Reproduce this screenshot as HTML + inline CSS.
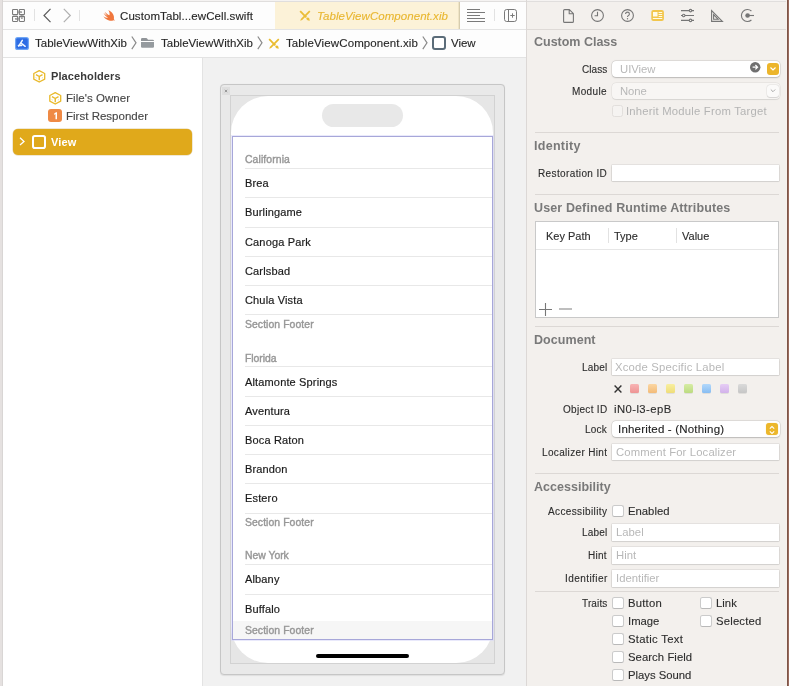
<!DOCTYPE html>
<html><head><meta charset="utf-8"><style>
html,body{margin:0;padding:0;width:789px;height:686px;overflow:hidden;background:#fff;}
body{position:relative;font-family:"Liberation Sans", sans-serif;}
.t{will-change:transform;}
.t{position:absolute;white-space:pre;}
.r{position:absolute;box-sizing:border-box;}
svg{position:absolute;overflow:visible;}
</style></head><body>
<div class="r" style="left:0px;top:0px;width:789px;height:686px;background:#ffffff"></div>
<div class="r" style="left:0px;top:0px;width:2px;height:686px;background:#e5e1e0"></div>
<div class="r" style="left:2px;top:0px;width:1px;height:686px;background:#d9d6d5"></div>
<div class="r" style="left:3px;top:0px;width:784px;height:1px;background:#f5f3f2"></div>
<div class="r" style="left:3px;top:1px;width:784px;height:1px;background:#e0dedd"></div>
<div class="r" style="left:3px;top:2px;width:523px;height:27px;background:#fdfdfd"></div>
<div class="r" style="left:3px;top:29px;width:523px;height:1px;background:#e3e3e3"></div>
<div class="r" style="left:3px;top:30px;width:523px;height:27px;background:#fdfdfd"></div>
<div class="r" style="left:3px;top:57px;width:523px;height:1px;background:#e3e3e3"></div>
<div class="r" style="left:3px;top:58px;width:199px;height:628px;background:#ffffff"></div>
<div class="r" style="left:202px;top:58px;width:1px;height:628px;background:#e3e3e3"></div>
<div class="r" style="left:203px;top:58px;width:323px;height:628px;background:#f1f1f1"></div>
<div class="r" style="left:526px;top:0px;width:1px;height:686px;background:#dcd8d6"></div>
<div class="r" style="left:527px;top:2px;width:260px;height:684px;background:#f3f0ed"></div>
<div class="r" style="left:527px;top:29px;width:260px;height:1px;background:#dedad7"></div>
<div class="r" style="left:786px;top:0px;width:1px;height:686px;background:#f9f0ec"></div>
<div class="r" style="left:787px;top:0px;width:1px;height:686px;background:#7b5649"></div>
<div class="r" style="left:788px;top:0px;width:1px;height:686px;background:#9b6b5d"></div>
<svg style="left:12px;top:9px;" width="13" height="13" viewBox="0 0 13 13"><g fill="none" stroke="#7a7a7a" stroke-width="1.1"><rect x="0.55" y="0.55" width="5.1" height="5.1" rx="0.6"/><rect x="7.35" y="0.55" width="5.1" height="5.1" rx="0.6"/><rect x="0.55" y="7.35" width="5.1" height="5.1" rx="0.6"/><rect x="7.35" y="7.35" width="5.1" height="5.1" rx="0.6"/><path d="M5.6 3.1H9.6M8.6 2.1L9.6 3.1L8.6 4.1M9.9 5.6V9.6M8.9 8.6L9.9 9.6L10.9 8.6M7.4 9.9H3.4M4.4 8.9L3.4 9.9L4.4 10.9" stroke-width="0.9"/></g></svg>
<div class="r" style="left:34px;top:9px;width:1px;height:12px;background:#e2e2e2"></div>
<svg style="left:43px;top:8px;" width="9" height="15" viewBox="0 0 9 15"><path d="M7.5 0.8L1 7.5L7.5 14.2" fill="none" stroke="#5c5c5c" stroke-width="1.2"/></svg>
<svg style="left:63px;top:8px;" width="9" height="15" viewBox="0 0 9 15"><path d="M0.8 0.8L7.3 7.5L0.8 14.2" fill="none" stroke="#b0b0b0" stroke-width="1.2"/></svg>
<div class="r" style="left:79px;top:10px;width:1px;height:11px;background:#e2e2e2"></div>
<svg style="left:100px;top:7px;" width="16" height="16" viewBox="0 0 16 16"><g transform="translate(3.4 4.2) scale(0.64) translate(-2.7 -3.84)"><path d="M13.543 3.844c4.114 2.489 6.545 7.806 5.521 12.089.25.393.47.85.687 1.342.23.528.43 1.145.33 1.87-.43-.813-1.06-1.157-1.564-1.234-1.928 1.045-4.583 1.292-6.896.627C8.768 17.755 5.87 15.86 3.757 13.29a11.02 11.02 0 0 1-1.05-1.556c2.136 1.696 4.77 2.732 7.29 2.696-3.064-2.08-5.58-4.877-7.137-7.69 2.13 1.795 4.78 3.68 6.73 4.77-2.063-2.1-3.843-4.61-4.846-6.915 1.79 1.95 5.067 4.424 7.293 5.578.153-.406.237-.811.266-1.214.24-2.535-.5-5.132-1.96-7.115z" fill="#f0773d"/></g></svg>
<div class="t" style="left:120px;top:11px;font-size:11.5px;line-height:11.5px;color:#262626;font-weight:400;letter-spacing:0.079px;-webkit-text-stroke:0.12px #262626;">CustomTabl...ewCell.swift</div>
<div class="r" style="left:275px;top:2px;width:184px;height:27px;background:#fcf2d8"></div>
<div class="r" style="left:458px;top:2px;width:1px;height:27px;background:#efe4c6"></div>
<div class="r" style="left:459px;top:2px;width:1px;height:27px;background:#d6ccae"></div>
<svg style="left:299px;top:10px;" width="12" height="11" viewBox="0 0 12 11"><g fill="#ebbd35"><path d="M10.2 0.6L11.4 1.8L3.2 10L1.2 10.8L2 8.8Z"/><path d="M0.5 1.8L1.8 0.5L8 6.7L6.7 8Z"/><path d="M7.3 8.3Q8.2 7.2 9.2 7.5Q10.6 8 10.8 10.8Q8 10.6 7.5 9.2Q7.3 8.8 7.3 8.3Z"/></g></svg>
<div class="t" style="left:317px;top:11px;font-size:11.5px;line-height:11.5px;color:#e8b630;font-weight:400;font-style:italic;letter-spacing:0.055px;-webkit-text-stroke:0.12px #e8b630;">TableViewComponent.xib</div>
<svg style="left:467px;top:9px;" width="19" height="13" viewBox="0 0 19 13"><g stroke="#7a7a7a" stroke-width="1"><path d="M0 0.5H13M0 3.5H18M0 6.5H13M0 9.5H18M0 12.5H18"/></g></svg>
<div class="r" style="left:494px;top:9px;width:1px;height:12px;background:#e2e2e2"></div>
<svg style="left:504px;top:9px;" width="14" height="13" viewBox="0 0 14 13"><g fill="none" stroke="#7a7a7a" stroke-width="1"><rect x="0.5" y="0.5" width="12" height="12" rx="2.2"/><path d="M4.5 0.5V12.5M6.3 6.5H10.7M8.5 4.3V8.7"/></g></svg>
<svg style="left:15px;top:37px;" width="14" height="13" viewBox="0 0 14 13"><rect x="0" y="0" width="14" height="13" rx="2.6" fill="#6fa6f5"/><rect x="1.2" y="1.2" width="11.6" height="10.6" rx="1.4" fill="#2c6ce4"/><g stroke="#eef6ff" stroke-width="1.5" stroke-linecap="round" fill="none"><path d="M7.3 3.4L3.7 9.2M3.4 8.6H6.6M6.4 6.3L10.2 9.3"/></g></svg>
<div class="t" style="left:35px;top:38px;font-size:11.5px;line-height:11.5px;color:#262626;font-weight:400;letter-spacing:0.010px;-webkit-text-stroke:0.12px #262626;">TableViewWithXib</div>
<svg style="left:131px;top:36px;" width="6" height="14" viewBox="0 0 6 14"><path d="M0.8 0.5L5 6.8L0.8 13.2" fill="none" stroke="#8a8a8a" stroke-width="1.2"/></svg>
<svg style="left:141px;top:38px;" width="13" height="10" viewBox="0 0 13 10"><path d="M0 1.2Q0 0 1.2 0H5Q6 0 6.5 1L7 1.8H11.8Q13 1.8 13 3V2.9H0Z" fill="#909498"/><path d="M0 4H13V8.6Q13 9.8 11.8 9.8H1.2Q0 9.8 0 8.6Z" fill="#959a9e"/></svg>
<div class="t" style="left:161px;top:38px;font-size:11.5px;line-height:11.5px;color:#262626;font-weight:400;letter-spacing:0.010px;-webkit-text-stroke:0.12px #262626;">TableViewWithXib</div>
<svg style="left:257px;top:36px;" width="6" height="14" viewBox="0 0 6 14"><path d="M0.8 0.5L5 6.8L0.8 13.2" fill="none" stroke="#8a8a8a" stroke-width="1.2"/></svg>
<svg style="left:268px;top:38px;" width="12" height="11" viewBox="0 0 12 11"><g fill="#e9bb2f"><path d="M10.2 0.6L11.4 1.8L3.2 10L1.2 10.8L2 8.8Z"/><path d="M0.5 1.8L1.8 0.5L8 6.7L6.7 8Z"/><path d="M7.3 8.3Q8.2 7.2 9.2 7.5Q10.6 8 10.8 10.8Q8 10.6 7.5 9.2Q7.3 8.8 7.3 8.3Z"/></g></svg>
<div class="t" style="left:286px;top:38px;font-size:11.5px;line-height:11.5px;color:#262626;font-weight:400;letter-spacing:0.111px;-webkit-text-stroke:0.12px #262626;">TableViewComponent.xib</div>
<svg style="left:422px;top:36px;" width="6" height="14" viewBox="0 0 6 14"><path d="M0.8 0.5L5 6.8L0.8 13.2" fill="none" stroke="#8a8a8a" stroke-width="1.2"/></svg>
<svg style="left:432px;top:36px;" width="14" height="14" viewBox="0 0 14 14"><rect x="1" y="1" width="12" height="12" rx="2" fill="#fff" stroke="#5b6c79" stroke-width="2"/></svg>
<div class="t" style="left:451px;top:38px;font-size:11.5px;line-height:11.5px;color:#262626;font-weight:400;letter-spacing:-0.055px;-webkit-text-stroke:0.12px #262626;">View</div>
<svg style="left:33px;top:70px;" width="13" height="13" viewBox="0 0 13 13"><g fill="none" stroke="#e9b92a" stroke-linejoin="round"><path d="M6.25 0.7L11.7 3.5V9.2L6.25 12L0.8 9.2V3.5Z" stroke-width="1.3"/><path d="M3 4.6L6.25 6.5L9.5 4.6M6.25 6.5V10.2" stroke-width="1.4"/><path d="M2.6 7.6L3.6 8.1M9.9 7.6L8.9 8.1" stroke-width="0.9" opacity="0.6"/></g></svg>
<div class="t" style="left:51px;top:71px;font-size:11px;line-height:11px;color:#3a3a3a;font-weight:700;letter-spacing:0.101px;">Placeholders</div>
<svg style="left:49px;top:92px;" width="13" height="13" viewBox="0 0 13 13"><g fill="none" stroke="#e9b92a" stroke-linejoin="round"><path d="M6.25 0.7L11.7 3.5V9.2L6.25 12L0.8 9.2V3.5Z" stroke-width="1.3"/><path d="M3 4.6L6.25 6.5L9.5 4.6M6.25 6.5V10.2" stroke-width="1.4"/><path d="M2.6 7.6L3.6 8.1M9.9 7.6L8.9 8.1" stroke-width="0.9" opacity="0.6"/></g></svg>
<div class="t" style="left:66px;top:93px;font-size:11.5px;line-height:11.5px;color:#454545;font-weight:400;letter-spacing:0.046px;-webkit-text-stroke:0.12px #454545;">File's Owner</div>
<div class="r" style="left:48px;top:109px;width:14px;height:13px;background:#ef8a45;border-radius:3px"></div>
<svg style="left:48px;top:109px;" width="14" height="13" viewBox="0 0 14 13"><path d="M6.2 4.6L8 3.2H9V10.2H7.5V5.1L6.2 5.9Z" fill="#fff"/></svg>
<div class="t" style="left:66px;top:111px;font-size:11.5px;line-height:11.5px;color:#454545;font-weight:400;letter-spacing:0.013px;-webkit-text-stroke:0.12px #454545;">First Responder</div>
<div class="r" style="left:13px;top:129px;width:179px;height:26px;background:#e0a91b;border-radius:5px;box-shadow:0 0 0 0.5px rgba(170,120,10,0.35)"></div>
<svg style="left:19px;top:137px;" width="7" height="9" viewBox="0 0 7 9"><path d="M1 0.8L5 4.4L1 8" fill="none" stroke="#fff" stroke-width="1.3"/></svg>
<svg style="left:32px;top:135px;" width="14" height="14" viewBox="0 0 14 14"><rect x="1" y="1" width="12" height="12" rx="1.8" fill="none" stroke="#fff" stroke-width="2"/></svg>
<div class="t" style="left:50.5px;top:137px;font-size:11px;line-height:11px;color:#ffffff;font-weight:700;letter-spacing:0.156px;">View</div>
<div class="r" style="left:220px;top:84px;width:285px;height:591px;background:#e9e9e9;border:1px solid #c6c6c6;border-radius:4px;box-shadow:0 0.5px 1px rgba(0,0,0,0.08)"></div>
<div class="r" style="left:222px;top:87px;width:8px;height:8px;background:#dedede"></div>
<svg style="left:223px;top:88px;" width="6" height="6" viewBox="0 0 6 6"><path d="M1.8 1.8L4.2 4.2M4.2 1.8L1.8 4.2" stroke="#9a9a9a" stroke-width="1"/></svg>
<div class="r" style="left:230px;top:95px;width:265px;height:569px;background:#e6e6e6;border:1px solid #d2d2d2"></div>
<div class="r" style="left:231px;top:96px;width:262px;height:567px;background:#ffffff;border-radius:37px"></div>
<div class="r" style="left:322px;top:104px;width:81px;height:23px;background:#e8e8e8;border-radius:11.5px"></div>
<div class="r" style="left:316px;top:654px;width:93px;height:4px;background:#000;border-radius:2px"></div>
<div class="r" style="left:232px;top:621px;width:260px;height:18px;background:#f6f6f6"></div>
<div class="r" style="left:232px;top:136px;width:261px;height:504px;border:1px solid #a7a7d9;box-shadow:0 0 0 1px rgba(215,215,248,0.55)"></div>
<div class="t" style="left:245.3px;top:155px;font-size:10.4px;line-height:10.4px;color:#979797;font-weight:400;letter-spacing:0.109px;-webkit-text-stroke:0.4px #979797;">California</div>
<div class="r" style="left:245px;top:168px;width:247px;height:1px;background:#e8e8e8"></div>
<div class="r" style="left:245px;top:197px;width:247px;height:1px;background:#e8e8e8"></div>
<div class="r" style="left:245px;top:227px;width:247px;height:1px;background:#e8e8e8"></div>
<div class="r" style="left:245px;top:256px;width:247px;height:1px;background:#e8e8e8"></div>
<div class="r" style="left:245px;top:285px;width:247px;height:1px;background:#e8e8e8"></div>
<div class="r" style="left:245px;top:314px;width:247px;height:1px;background:#e8e8e8"></div>
<div class="t" style="left:245px;top:178px;font-size:11px;line-height:11px;color:#1a1a1a;font-weight:400;letter-spacing:0.150px;-webkit-text-stroke:0.18px #1a1a1a;">Brea</div>
<div class="t" style="left:245px;top:207px;font-size:11px;line-height:11px;color:#1a1a1a;font-weight:400;letter-spacing:0.150px;-webkit-text-stroke:0.18px #1a1a1a;">Burlingame</div>
<div class="t" style="left:245px;top:237px;font-size:11px;line-height:11px;color:#1a1a1a;font-weight:400;letter-spacing:0.150px;-webkit-text-stroke:0.18px #1a1a1a;">Canoga Park</div>
<div class="t" style="left:245px;top:266px;font-size:11px;line-height:11px;color:#1a1a1a;font-weight:400;letter-spacing:0.150px;-webkit-text-stroke:0.18px #1a1a1a;">Carlsbad</div>
<div class="t" style="left:245px;top:295px;font-size:11px;line-height:11px;color:#1a1a1a;font-weight:400;letter-spacing:0.150px;-webkit-text-stroke:0.18px #1a1a1a;">Chula Vista</div>
<div class="t" style="left:245.3px;top:320px;font-size:10.4px;line-height:10.4px;color:#979797;font-weight:400;letter-spacing:0.080px;-webkit-text-stroke:0.4px #979797;">Section Footer</div>
<div class="t" style="left:245.3px;top:354px;font-size:10.4px;line-height:10.4px;color:#979797;font-weight:400;letter-spacing:-0.024px;-webkit-text-stroke:0.4px #979797;">Florida</div>
<div class="r" style="left:245px;top:366px;width:247px;height:1px;background:#e8e8e8"></div>
<div class="r" style="left:245px;top:396px;width:247px;height:1px;background:#e8e8e8"></div>
<div class="r" style="left:245px;top:425px;width:247px;height:1px;background:#e8e8e8"></div>
<div class="r" style="left:245px;top:454px;width:247px;height:1px;background:#e8e8e8"></div>
<div class="r" style="left:245px;top:483px;width:247px;height:1px;background:#e8e8e8"></div>
<div class="r" style="left:245px;top:513px;width:247px;height:1px;background:#e8e8e8"></div>
<div class="t" style="left:245px;top:377px;font-size:11px;line-height:11px;color:#1a1a1a;font-weight:400;letter-spacing:0.150px;-webkit-text-stroke:0.18px #1a1a1a;">Altamonte Springs</div>
<div class="t" style="left:245px;top:406px;font-size:11px;line-height:11px;color:#1a1a1a;font-weight:400;letter-spacing:0.150px;-webkit-text-stroke:0.18px #1a1a1a;">Aventura</div>
<div class="t" style="left:245px;top:435px;font-size:11px;line-height:11px;color:#1a1a1a;font-weight:400;letter-spacing:0.150px;-webkit-text-stroke:0.18px #1a1a1a;">Boca Raton</div>
<div class="t" style="left:245px;top:464px;font-size:11px;line-height:11px;color:#1a1a1a;font-weight:400;letter-spacing:0.150px;-webkit-text-stroke:0.18px #1a1a1a;">Brandon</div>
<div class="t" style="left:245px;top:493px;font-size:11px;line-height:11px;color:#1a1a1a;font-weight:400;letter-spacing:0.150px;-webkit-text-stroke:0.18px #1a1a1a;">Estero</div>
<div class="t" style="left:245.3px;top:518px;font-size:10.4px;line-height:10.4px;color:#979797;font-weight:400;letter-spacing:0.080px;-webkit-text-stroke:0.4px #979797;">Section Footer</div>
<div class="t" style="left:245.3px;top:551px;font-size:10.4px;line-height:10.4px;color:#979797;font-weight:400;letter-spacing:-0.013px;-webkit-text-stroke:0.4px #979797;">New York</div>
<div class="r" style="left:245px;top:564px;width:247px;height:1px;background:#e8e8e8"></div>
<div class="r" style="left:245px;top:594px;width:247px;height:1px;background:#e8e8e8"></div>
<div class="t" style="left:245px;top:574px;font-size:11px;line-height:11px;color:#1a1a1a;font-weight:400;letter-spacing:0.150px;-webkit-text-stroke:0.18px #1a1a1a;">Albany</div>
<div class="t" style="left:245px;top:604px;font-size:11px;line-height:11px;color:#1a1a1a;font-weight:400;letter-spacing:0.150px;-webkit-text-stroke:0.18px #1a1a1a;">Buffalo</div>
<div class="t" style="left:245.3px;top:626px;font-size:10.4px;line-height:10.4px;color:#979797;font-weight:400;letter-spacing:0.080px;-webkit-text-stroke:0.4px #979797;">Section Footer</div>
<svg style="left:563px;top:9px;" width="11" height="14" viewBox="0 0 11 14"><path d="M0.6 1.6Q0.6 0.6 1.6 0.6H6.4L10.4 4.6V12.4Q10.4 13.4 9.4 13.4H1.6Q0.6 13.4 0.6 12.4Z M6.2 0.8V4.8H10.2" fill="none" stroke="#767676" stroke-width="1.1" stroke-linejoin="round"/></svg>
<svg style="left:591px;top:9px;" width="13" height="13" viewBox="0 0 13 13"><circle cx="6.5" cy="6.5" r="5.9" fill="none" stroke="#767676" stroke-width="1.1"/><path d="M6.5 2.8V6.8H3.6" fill="none" stroke="#767676" stroke-width="1.1"/></svg>
<svg style="left:621px;top:9px;" width="13" height="13" viewBox="0 0 13 13"><circle cx="6.5" cy="6.5" r="5.9" fill="none" stroke="#767676" stroke-width="1.1"/><path d="M4.6 5.1Q4.6 3.1 6.5 3.1Q8.4 3.1 8.4 4.9Q8.4 6 7.3 6.6Q6.5 7.1 6.5 8" fill="none" stroke="#767676" stroke-width="1.1"/><circle cx="6.5" cy="9.8" r="0.7" fill="#767676"/></svg>
<svg style="left:651px;top:9px;" width="14" height="13" viewBox="0 0 14 13"><rect x="0.3" y="0.9" width="12.6" height="11" rx="2" fill="#f2c64c"/><rect x="2" y="3" width="4.5" height="4.5" fill="#fffbe8"/><path d="M7.6 3.5H11.2M7.6 5.5H11.2M7.6 7.5H11.2M1.8 9.5H11.3" stroke="#fffbe8" stroke-width="1"/></svg>
<svg style="left:681px;top:9px;" width="14" height="13" viewBox="0 0 14 13"><g fill="none" stroke="#767676" stroke-width="1.1"><path d="M0 1.6H8.2M10.8 1.6H13M0 6.5H1.4M4 6.5H13M0 11.4H8.2M10.8 11.4H13"/><circle cx="9.5" cy="1.6" r="1.25"/><circle cx="2.7" cy="6.5" r="1.25"/><circle cx="9.5" cy="11.4" r="1.25"/></g></svg>
<svg style="left:711px;top:10px;" width="13" height="12" viewBox="0 0 13 12"><g fill="none" stroke="#767676" stroke-width="1.1" stroke-linejoin="miter"><path d="M0.6 0.6V11.4H11.4Z"/><path d="M2.6 4.7V9.3H7.2Z" stroke-width="1.1"/></g></svg>
<svg style="left:741px;top:9px;" width="14" height="13" viewBox="0 0 14 13"><path d="M10.4 2A6 6 0 1 0 10.4 11" fill="none" stroke="#767676" stroke-width="1.1"/><circle cx="6.6" cy="6.5" r="2.3" fill="#767676"/><path d="M6.6 6.5H13" stroke="#767676" stroke-width="1.1"/></svg>
<div class="t" style="left:534.3px;top:36px;font-size:12.5px;line-height:12.5px;color:#797979;font-weight:700;letter-spacing:-0.013px;">Custom Class</div>
<div class="t" style="left:581.80px;top:65px;font-size:10px;line-height:10px;color:#2d2d2d;font-weight:400;letter-spacing:0.077px;-webkit-text-stroke:0.12px #2d2d2d;">Class</div>
<div class="r" style="left:612px;top:61px;width:168px;height:16px;background:#fff;border-radius:4px;box-shadow:0 0 0 0.5px rgba(0,0,0,0.12), 0 0.5px 1.5px rgba(0,0,0,0.18);"></div>
<div class="t" style="left:619.5px;top:64px;font-size:11.3px;line-height:11.3px;color:#b8b8b8;font-weight:400;letter-spacing:-0.016px;">UIView</div>
<svg style="left:750px;top:62px;" width="11" height="11" viewBox="0 0 11 11"><circle cx="5.2" cy="5.2" r="5.2" fill="#6f6f6f"/><path d="M2.6 5.2H7.6M5.4 3L7.6 5.2L5.4 7.4" fill="none" stroke="#fff" stroke-width="1.2"/></svg>
<div class="r" style="left:767px;top:63px;width:12px;height:12px;background:#ecb52b;border-radius:3px"></div>
<svg style="left:769px;top:66px;" width="8" height="6" viewBox="0 0 8 6"><path d="M1.5 1.5L4 4L6.5 1.5" fill="none" stroke="#fff" stroke-width="1.2"/></svg>
<div class="t" style="left:572.30px;top:87px;font-size:10px;line-height:10px;color:#2d2d2d;font-weight:400;letter-spacing:0.348px;-webkit-text-stroke:0.12px #2d2d2d;">Module</div>
<div class="r" style="left:612px;top:83px;width:168px;height:16px;background:#f8f6f4;border-radius:4px;box-shadow:0 0 0 0.5px rgba(0,0,0,0.07), 0 0.5px 1px rgba(0,0,0,0.08)"></div>
<div class="r" style="left:767px;top:85px;width:12px;height:12px;background:#fbfaf9;border-radius:3px;box-shadow:0 0 0 0.5px rgba(0,0,0,0.08),0 0.5px 1px rgba(0,0,0,0.1)"></div>
<svg style="left:769px;top:88px;" width="8" height="6" viewBox="0 0 8 6"><path d="M1.8 1.5L4 3.7L6.2 1.5" fill="none" stroke="#aaa" stroke-width="1"/></svg>
<div class="t" style="left:619.5px;top:86px;font-size:11.3px;line-height:11.3px;color:#b8b8b8;font-weight:400;letter-spacing:-0.079px;">None</div>
<div class="r" style="left:611.5px;top:105.3px;width:11.5px;height:11.3px;background:#f5f3f1;border:1px solid #e2dfdc;border-radius:2.5px"></div>
<div class="t" style="left:626.3px;top:106px;font-size:11.3px;line-height:11.3px;color:#b4b4b4;font-weight:400;letter-spacing:0.207px;">Inherit Module From Target</div>
<div class="r" style="left:535px;top:132px;width:244px;height:1px;background:#dcd8d5"></div>
<div class="t" style="left:534.3px;top:140px;font-size:12.5px;line-height:12.5px;color:#797979;font-weight:700;letter-spacing:0.293px;">Identity</div>
<div class="t" style="left:538.00px;top:169px;font-size:10px;line-height:10px;color:#2d2d2d;font-weight:400;letter-spacing:0.377px;-webkit-text-stroke:0.12px #2d2d2d;">Restoration ID</div>
<div class="r" style="left:611.5px;top:164.5px;width:167.5px;height:16.5px;background:#fff;box-shadow:0 0 0 0.5px rgba(0,0,0,0.12), 0 0.5px 1.5px rgba(0,0,0,0.18);"></div>
<div class="r" style="left:535px;top:194px;width:244px;height:1px;background:#dcd8d5"></div>
<div class="t" style="left:534.3px;top:202px;font-size:12.5px;line-height:12.5px;color:#797979;font-weight:700;letter-spacing:0.122px;">User Defined Runtime Attributes</div>
<div class="r" style="left:535px;top:221px;width:244px;height:97px;background:#fff;border:1px solid #c9c9c9"></div>
<div class="r" style="left:536px;top:249px;width:242px;height:1px;background:#e6e6e6"></div>
<div class="r" style="left:608px;top:228px;width:1px;height:15px;background:#e2e2e2"></div>
<div class="r" style="left:676px;top:228px;width:1px;height:15px;background:#e2e2e2"></div>
<div class="t" style="left:545.7px;top:231px;font-size:11px;line-height:11px;color:#2d2d2d;font-weight:400;-webkit-text-stroke:0.12px #2d2d2d;">Key Path</div>
<div class="t" style="left:613.8px;top:231px;font-size:11px;line-height:11px;color:#2d2d2d;font-weight:400;-webkit-text-stroke:0.12px #2d2d2d;">Type</div>
<div class="t" style="left:681.8px;top:231px;font-size:11px;line-height:11px;color:#2d2d2d;font-weight:400;-webkit-text-stroke:0.12px #2d2d2d;">Value</div>
<svg style="left:539px;top:303px;" width="13" height="13" viewBox="0 0 13 13"><path d="M6.5 0V13M0 6.5H13" stroke="#777" stroke-width="1.1"/></svg>
<div class="r" style="left:559px;top:308px;width:13px;height:2px;background:#bebebe"></div>
<div class="r" style="left:535px;top:326px;width:244px;height:1px;background:#dcd8d5"></div>
<div class="t" style="left:534.3px;top:334px;font-size:12.5px;line-height:12.5px;color:#797979;font-weight:700;letter-spacing:0.059px;">Document</div>
<div class="t" style="left:581.80px;top:363px;font-size:10px;line-height:10px;color:#2d2d2d;font-weight:400;letter-spacing:0.186px;-webkit-text-stroke:0.12px #2d2d2d;">Label</div>
<div class="r" style="left:611.5px;top:358.8px;width:167.5px;height:16.5px;background:#fff;box-shadow:0 0 0 0.5px rgba(0,0,0,0.12), 0 0.5px 1.5px rgba(0,0,0,0.18);"></div>
<div class="t" style="left:615px;top:362px;font-size:11.3px;line-height:11.3px;color:#b8b8b8;font-weight:400;letter-spacing:0.199px;">Xcode Specific Label</div>
<svg style="left:614px;top:385px;" width="8" height="8" viewBox="0 0 8 8"><path d="M0.6 0.6L7.4 7.4M7.4 0.6L0.6 7.4" stroke="#333" stroke-width="1.4"/></svg>
<div class="r" style="left:630px;top:384px;width:8.5px;height:8.5px;background:linear-gradient(#f8b4b4,#ee9494);border-radius:1.5px;box-shadow:0 0.5px 0.5px rgba(0,0,0,0.15)"></div>
<div class="r" style="left:648px;top:384px;width:8.5px;height:8.5px;background:linear-gradient(#fbd6a2,#f3bb78);border-radius:1.5px;box-shadow:0 0.5px 0.5px rgba(0,0,0,0.15)"></div>
<div class="r" style="left:666px;top:384px;width:8.5px;height:8.5px;background:linear-gradient(#f8efa0,#efdd78);border-radius:1.5px;box-shadow:0 0.5px 0.5px rgba(0,0,0,0.15)"></div>
<div class="r" style="left:684px;top:384px;width:8.5px;height:8.5px;background:linear-gradient(#d6eca4,#bcdb80);border-radius:1.5px;box-shadow:0 0.5px 0.5px rgba(0,0,0,0.15)"></div>
<div class="r" style="left:702px;top:384px;width:8.5px;height:8.5px;background:linear-gradient(#b2d8fb,#88bdf2);border-radius:1.5px;box-shadow:0 0.5px 0.5px rgba(0,0,0,0.15)"></div>
<div class="r" style="left:720px;top:384px;width:8.5px;height:8.5px;background:linear-gradient(#e6cdf5,#d2b2ea);border-radius:1.5px;box-shadow:0 0.5px 0.5px rgba(0,0,0,0.15)"></div>
<div class="r" style="left:738px;top:384px;width:8.5px;height:8.5px;background:linear-gradient(#dadada,#c6c6c6);border-radius:1.5px;box-shadow:0 0.5px 0.5px rgba(0,0,0,0.15)"></div>
<div class="t" style="left:562.70px;top:405px;font-size:10px;line-height:10px;color:#2d2d2d;font-weight:400;letter-spacing:0.312px;-webkit-text-stroke:0.12px #2d2d2d;">Object ID</div>
<div class="t" style="left:613.5px;top:404px;font-size:11.3px;line-height:11.3px;color:#2d2d2d;font-weight:400;letter-spacing:0.423px;-webkit-text-stroke:0.12px #2d2d2d;">iN0-l3-epB</div>
<div class="t" style="left:585.10px;top:425px;font-size:10px;line-height:10px;color:#2d2d2d;font-weight:400;letter-spacing:0.244px;-webkit-text-stroke:0.12px #2d2d2d;">Lock</div>
<div class="r" style="left:612px;top:421px;width:167.5px;height:16px;background:#fff;border-radius:4px;box-shadow:0 0 0 0.5px rgba(0,0,0,0.12), 0 0.5px 1.5px rgba(0,0,0,0.18);"></div>
<div class="t" style="left:618px;top:424px;font-size:11.5px;line-height:11.5px;color:#222;font-weight:400;letter-spacing:0.191px;-webkit-text-stroke:0.12px #222;">Inherited - (Nothing)</div>
<div class="r" style="left:766px;top:423px;width:12px;height:12px;background:#ecb72b;border-radius:3px;box-shadow:0 0 1px rgba(236,183,43,0.6)"></div>
<svg style="left:768px;top:424.5px;" width="8" height="10" viewBox="0 0 8 10"><path d="M1.8 3.6L4 1.6L6.2 3.6M1.8 6.4L4 8.4L6.2 6.4" fill="none" stroke="#fff" stroke-width="1.1"/></svg>
<div class="t" style="left:541.80px;top:448px;font-size:10px;line-height:10px;color:#2d2d2d;font-weight:400;letter-spacing:0.343px;-webkit-text-stroke:0.12px #2d2d2d;">Localizer Hint</div>
<div class="r" style="left:611.5px;top:443.7px;width:167.5px;height:16.8px;background:#fff;box-shadow:0 0 0 0.5px rgba(0,0,0,0.12), 0 0.5px 1.5px rgba(0,0,0,0.18);"></div>
<div class="t" style="left:615.6px;top:447px;font-size:11.3px;line-height:11.3px;color:#b8b8b8;font-weight:400;letter-spacing:0.133px;">Comment For Localizer</div>
<div class="r" style="left:535px;top:473px;width:244px;height:1px;background:#dcd8d5"></div>
<div class="t" style="left:534.3px;top:481px;font-size:12.5px;line-height:12.5px;color:#797979;font-weight:700;letter-spacing:0.028px;">Accessibility</div>
<div class="t" style="left:547.90px;top:507px;font-size:10px;line-height:10px;color:#2d2d2d;font-weight:400;letter-spacing:0.372px;-webkit-text-stroke:0.12px #2d2d2d;">Accessibility</div>
<div class="r" style="left:612.3px;top:505.3px;width:11.5px;height:11.3px;background:#fff;border:1px solid #cbcbcb;border-bottom-color:#b9b9b9;border-radius:2.5px"></div>
<div class="t" style="left:628.3px;top:506px;font-size:11.3px;line-height:11.3px;color:#2d2d2d;font-weight:400;-webkit-text-stroke:0.12px #2d2d2d;">Enabled</div>
<div class="t" style="left:581.80px;top:528px;font-size:10px;line-height:10px;color:#2d2d2d;font-weight:400;letter-spacing:0.186px;-webkit-text-stroke:0.12px #2d2d2d;">Label</div>
<div class="r" style="left:611.5px;top:524px;width:167.5px;height:16.5px;background:#fff;box-shadow:0 0 0 0.5px rgba(0,0,0,0.12), 0 0.5px 1.5px rgba(0,0,0,0.18);"></div>
<div class="t" style="left:615.5px;top:527px;font-size:11.3px;line-height:11.3px;color:#b8b8b8;font-weight:400;">Label</div>
<div class="t" style="left:588.40px;top:551px;font-size:10px;line-height:10px;color:#2d2d2d;font-weight:400;letter-spacing:0.251px;-webkit-text-stroke:0.12px #2d2d2d;">Hint</div>
<div class="r" style="left:611.5px;top:547px;width:167.5px;height:16.5px;background:#fff;box-shadow:0 0 0 0.5px rgba(0,0,0,0.12), 0 0.5px 1.5px rgba(0,0,0,0.18);"></div>
<div class="t" style="left:615.5px;top:550px;font-size:11.3px;line-height:11.3px;color:#b8b8b8;font-weight:400;">Hint</div>
<div class="t" style="left:564.50px;top:574px;font-size:10px;line-height:10px;color:#2d2d2d;font-weight:400;letter-spacing:0.434px;-webkit-text-stroke:0.12px #2d2d2d;">Identifier</div>
<div class="r" style="left:611.5px;top:570px;width:167.5px;height:16.5px;background:#fff;box-shadow:0 0 0 0.5px rgba(0,0,0,0.12), 0 0.5px 1.5px rgba(0,0,0,0.18);"></div>
<div class="t" style="left:615.5px;top:573px;font-size:11.3px;line-height:11.3px;color:#b8b8b8;font-weight:400;">Identifier</div>
<div class="r" style="left:535px;top:591px;width:244px;height:1px;background:#dcd8d5"></div>
<div class="t" style="left:581.70px;top:599px;font-size:10px;line-height:10px;color:#2d2d2d;font-weight:400;letter-spacing:0.143px;-webkit-text-stroke:0.12px #2d2d2d;">Traits</div>
<div class="r" style="left:612.3px;top:597.3px;width:11.5px;height:11.3px;background:#fff;border:1px solid #cbcbcb;border-bottom-color:#b9b9b9;border-radius:2.5px"></div>
<div class="t" style="left:628.2px;top:598px;font-size:11.3px;line-height:11.3px;color:#2d2d2d;font-weight:400;letter-spacing:0.221px;-webkit-text-stroke:0.12px #2d2d2d;">Button</div>
<div class="r" style="left:612.3px;top:615.3px;width:11.5px;height:11.3px;background:#fff;border:1px solid #cbcbcb;border-bottom-color:#b9b9b9;border-radius:2.5px"></div>
<div class="t" style="left:628.2px;top:616px;font-size:11.3px;line-height:11.3px;color:#2d2d2d;font-weight:400;-webkit-text-stroke:0.12px #2d2d2d;">Image</div>
<div class="r" style="left:612.3px;top:633.3px;width:11.5px;height:11.3px;background:#fff;border:1px solid #cbcbcb;border-bottom-color:#b9b9b9;border-radius:2.5px"></div>
<div class="t" style="left:628.2px;top:634px;font-size:11.3px;line-height:11.3px;color:#2d2d2d;font-weight:400;letter-spacing:0.299px;-webkit-text-stroke:0.12px #2d2d2d;">Static Text</div>
<div class="r" style="left:612.3px;top:651.3px;width:11.5px;height:11.3px;background:#fff;border:1px solid #cbcbcb;border-bottom-color:#b9b9b9;border-radius:2.5px"></div>
<div class="t" style="left:628.2px;top:652px;font-size:11.3px;line-height:11.3px;color:#2d2d2d;font-weight:400;letter-spacing:0.065px;-webkit-text-stroke:0.12px #2d2d2d;">Search Field</div>
<div class="r" style="left:612.3px;top:669.3px;width:11.5px;height:11.3px;background:#fff;border:1px solid #cbcbcb;border-bottom-color:#b9b9b9;border-radius:2.5px"></div>
<div class="t" style="left:628.2px;top:670px;font-size:11.3px;line-height:11.3px;color:#2d2d2d;font-weight:400;letter-spacing:-0.013px;-webkit-text-stroke:0.12px #2d2d2d;">Plays Sound</div>
<div class="r" style="left:700.3px;top:597.3px;width:11.5px;height:11.3px;background:#fff;border:1px solid #cbcbcb;border-bottom-color:#b9b9b9;border-radius:2.5px"></div>
<div class="t" style="left:716.2px;top:598px;font-size:11.3px;line-height:11.3px;color:#2d2d2d;font-weight:400;letter-spacing:0.041px;-webkit-text-stroke:0.12px #2d2d2d;">Link</div>
<div class="r" style="left:700.3px;top:615.3px;width:11.5px;height:11.3px;background:#fff;border:1px solid #cbcbcb;border-bottom-color:#b9b9b9;border-radius:2.5px"></div>
<div class="t" style="left:716.2px;top:616px;font-size:11.3px;line-height:11.3px;color:#2d2d2d;font-weight:400;letter-spacing:0.191px;-webkit-text-stroke:0.12px #2d2d2d;">Selected</div>
</body></html>
